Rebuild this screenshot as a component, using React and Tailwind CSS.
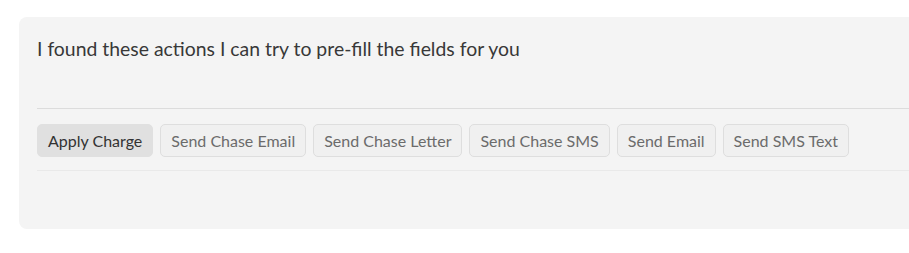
const actions = [
  "Send Chase Email",
  "Send Chase Letter",
  "Send Chase SMS",
  "Send Email",
  "Send SMS Text",
];

const App = () => {
  return (
    <div className="w-[909px] h-[253px] overflow-hidden bg-white font-['Lato',sans-serif]">
      <div className="ml-[19px] mt-[17px] w-[920px] h-[212px] rounded-[8px] bg-[#f4f4f4] pl-[18px]">
        {/* Message */}
        <p className="pt-[19px] h-[91px] text-[19.4px] leading-[26px] text-[#383838]">
          I found these actions I can try to pre-fill the fields for you
        </p>

        {/* Suggested actions */}
        <div className="border-t border-[#dcdcdc] pt-[15px] pb-[13px]">
          <div className="flex gap-[7px]">
            <button className="h-[33px] px-[10px] rounded-[5px] border border-[#e0e0e0] bg-[#e0e0e0] text-[16px] text-[#333]">
              Apply Charge
            </button>
            {actions.map((label) => (
              <button
                key={label}
                className="h-[33px] px-[10px] rounded-[5px] border border-[#dedede] bg-[#f0f0f0] text-[16px] text-[#6b6b6b]"
              >
                {label}
              </button>
            ))}
          </div>
        </div>
        <div className="border-t border-[#e9e9e9]" />
      </div>
    </div>
  );
};

export default App;
